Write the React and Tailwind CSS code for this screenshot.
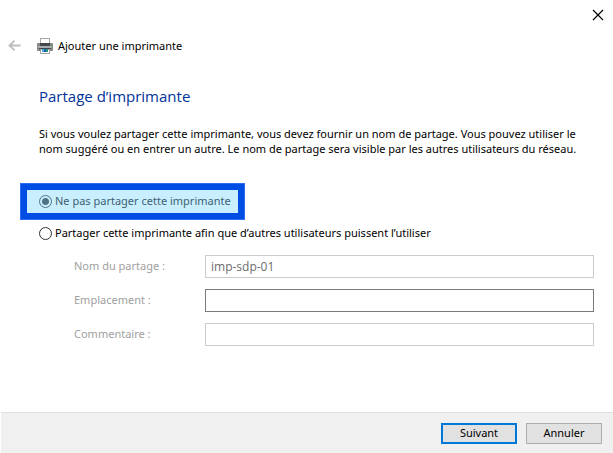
const fields = [
  { id: "share", label: "Nom du partage :", value: "imp-sdp-01", border: "border-[#cccccc]" },
  { id: "location", label: "Emplacement :", value: "", border: "border-[#7a7a7a]" },
  { id: "comment", label: "Commentaire :", value: "", border: "border-[#cccccc]" },
];

const radio =
  "m-0 h-[13px] w-[13px] shrink-0 appearance-none rounded-full border";

export default function App() {
  return (
    <main className="flex min-h-screen flex-col bg-white font-['Noto_Sans','Open_Sans',sans-serif] text-[11px] text-black">
      <div className="flex h-[30px] justify-end pr-[5px]">
        <button type="button" aria-label="Fermer" className="flex w-5 items-center justify-center">
          <svg width="12" height="12" viewBox="0 0 12 12" fill="none" stroke="#000" strokeWidth="1.2">
            <path d="M1 1l10 10M11 1L1 11" />
          </svg>
        </button>
      </div>

      <header className="flex h-8 items-center pl-2">
        <button type="button" aria-label="Retour" disabled className="mr-4 flex w-[13px] items-center">
          <svg width="13" height="12" viewBox="0 0 13 12" fill="none" stroke="#bcbcbc" strokeWidth="1.8">
            <path d="M12.500 5.500H1.500M6.500 0.700L1.500 5.500l5 4.800" />
          </svg>
        </button>
        <svg width="16" height="16" viewBox="0 0 16 16" aria-hidden="true">
          <rect x="3.500" y="0.500" width="9" height="6" fill="#fff" stroke="#a8a8a8" />
          <rect x="0" y="5" width="16" height="8" rx="1" fill="#85888b" />
          <rect x="1" y="8" width="14" height="2" fill="#a9adb0" />
          <rect x="3" y="5" width="10" height="3" fill="#45484b" />
          <rect x="2" y="10" width="12" height="1" fill="#45484b" />
          <rect x="14" y="8" width="1" height="1" fill="#6fd04a" />
          <path d="M3.500 11.500h9v4h-9z" fill="#fff" stroke="#a0a0a0" />
          <rect x="5" y="11" width="2" height="3" fill="#49a9dc" />
          <rect x="7" y="11" width="2" height="3" fill="#1565a8" />
          <rect x="9" y="11" width="2" height="3" fill="#2c8f83" />
        </svg>
        <span className="ml-[5px]">Ajouter une imprimante</span>
      </header>

      <form className="flex grow flex-col pr-[19px] pl-5" onSubmit={(e) => e.preventDefault()}>
        <h1 className="mt-[22px] pl-[19px] font-['Open_Sans','Noto_Sans',sans-serif] text-[15px] leading-6 text-[#003399]">
          Partage d’imprimante
        </h1>
        <p className="mt-[18px] pl-[19px] leading-[15px]">
          Si vous voulez partager cette imprimante, vous devez fournir un nom de partage. Vous pouvez utiliser le
          <br />
          nom suggéré ou en entrer un autre. Le nom de partage sera visible par les autres utilisateurs du réseau.
        </p>

        <label className="mt-[27px] flex h-[37px] w-[225px] items-center gap-[3px] border-[7px] border-[#004de6] bg-[#c9effe] pl-3 whitespace-nowrap text-[#3f5f73] outline -outline-offset-1 outline-[#2f6df0]">
          <input type="radio" name="mode" defaultChecked className={`${radio} border-[#4f7384] bg-[radial-gradient(circle,#4f7384_3px,transparent_4px)]`} />
          Ne pas partager cette imprimante
        </label>
        <label className="mt-1 flex h-[18px] items-center gap-[3px] pl-[19px]">
          <input type="radio" name="mode" className={`${radio} border-[#333333] bg-white`} />
          Partager cette imprimante afin que d’autres utilisateurs puissent l’utiliser
        </label>

        <div className="mt-[13px] flex flex-col gap-[11px] pl-[54px]">
          {fields.map((f) => (
            <div key={f.id} className="flex h-[23px] items-center">
              <label htmlFor={f.id} className="w-[131px] shrink-0 text-[#a0a0a0]">{f.label}</label>
              <input
                id={f.id}
                type="text"
                disabled
                defaultValue={f.value}
                className={`h-[23px] min-w-0 grow border bg-white px-[5px] pb-px font-['Open_Sans','Noto_Sans',sans-serif] text-xs text-[#6d6d6d] ${f.border}`}
              />
            </div>
          ))}
        </div>
      </form>

      <footer className="ml-px flex h-[41px] items-center justify-end gap-[9px] border-t border-[#dfdfdf] bg-[#f0f0f0] pr-[11px]">
        <button type="button" className="h-[21px] w-[76px] border-2 border-[#0078d7] bg-[#e1e1e1] leading-4">Suivant</button>
        <button type="button" className="h-[21px] w-[76px] border border-[#adadad] bg-[#e1e1e1] leading-4">Annuler</button>
      </footer>
    </main>
  );
}
